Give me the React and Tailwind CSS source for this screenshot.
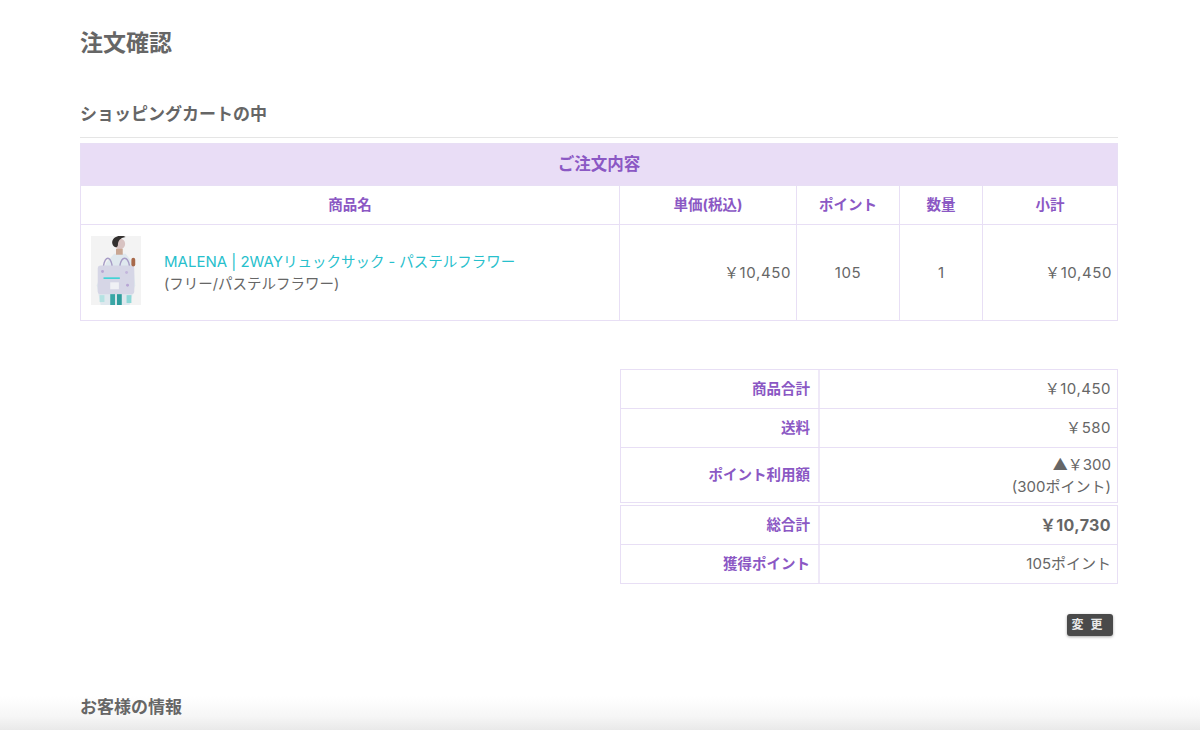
import React from 'react';

const font = "font-['Inter','Noto_Sans_CJK_JP',sans-serif]";
const headCell = 'border border-[#e8dff5] font-bold text-[#8b58c4] text-center p-0';
const bodyCell = 'border border-[#e8dff5] text-[#666] text-[15px] p-0';
const yen = '\uFFE5';

// small stand-in drawing of the product photo
const ProductThumb = () => (
  <svg width="50" height="69" viewBox="0 0 52 70" preserveAspectRatio="none" className="block">
    <rect width="52" height="70" fill="#f3f3f3" />
    <path d="M16 27 L24 18 L36 18 L44 28 L46 50 L40 70 L10 70 L6 50 Z" fill="#dfe8ee" />
    <rect x="7" y="30" width="38" height="29" rx="3" fill="#d6d6e6" />
    <path d="M13 30 C15 20 20 20 22 30 M30 30 C32 20 38 20 40 30" stroke="#a79cc6" strokeWidth="1.5" fill="none" />
    <rect x="13" y="42" width="17" height="1.5" fill="#2fd3d3" />
    <rect x="20" y="47" width="9" height="7" fill="#f0f1f5" />
    <circle cx="12" cy="36" r="1.5" fill="#b7a6d4" />
    <circle cx="38" cy="50" r="1.5" fill="#b7a6d4" />
    <circle cx="37" cy="37" r="1.5" fill="#c3b6dc" />
    <circle cx="30" cy="8" r="5.5" fill="#d8c3c2" />
    <path d="M22 7 C22 0 32 -2 36 1 C30 2 28 5 28 9 C28 13 23 12 22 7 Z" fill="#33302f" />
    <rect x="26" y="13" width="7" height="6" fill="#c9a793" />
    <rect x="42" y="22" width="4" height="9" rx="2" fill="#a8694a" />
    <rect x="20" y="59" width="5" height="11" fill="#3aa6a6" />
    <rect x="27" y="59" width="5" height="11" fill="#2f9d9d" />
    <rect x="37" y="60" width="5" height="8" fill="#8fd8d8" />
    <rect x="9" y="60" width="5" height="7" fill="#b4e2e2" />
  </svg>
);

const summary = [
  { label: '商品合計', value: <span className="tracking-[0.5px]">{yen}10,450</span>, h: 'h-[40px]' },
  { label: '送料', value: <span className="tracking-[0.5px]">{yen}580</span>, h: 'h-[39px]' },
  {
    label: 'ポイント利用額',
    value: <><span className="font-['Noto_Sans_CJK_JP',sans-serif]">▲</span>{yen}300<br />(300ポイント)</>,
    h: 'h-[55px]',
  },
  { label: '総合計', value: <span className="text-[16px] font-bold tracking-[0.4px]">{yen}10,730</span>, h: 'h-[40px]', gap: true },
  { label: '獲得ポイント', value: '105ポイント', h: 'h-[39px]' },
];

const App = () => {
  return (
    <div className={`relative h-[730px] overflow-hidden bg-white px-[80px] pt-[27px] ${font}`}>
      <h1 className="text-[23px] leading-[32px] font-bold text-[#666]">注文確認</h1>

      <h2 className="mt-[39px] h-[40px] w-[1038px] border-b border-[#e5e5e5] text-[17px] leading-[32px] font-bold text-[#666]">
        ショッピングカートの中
      </h2>

      <table className="mt-[5px] w-[1037px] table-fixed border-collapse">
        <colgroup>
          <col className="w-[539px]" />
          <col className="w-[177px]" />
          <col className="w-[103px]" />
          <col className="w-[83px]" />
          <col className="w-[135px]" />
        </colgroup>
        <tbody>
          <tr className="h-[42px]">
            <td colSpan={5} className={`${headCell} bg-[#e9ddf6] text-[16.5px]`}>ご注文内容</td>
          </tr>
          <tr className="h-[39px] text-[14.5px]">
            <td className={headCell}>商品名</td>
            <td className={headCell}>単価(税込)</td>
            <td className={headCell}>ポイント</td>
            <td className={headCell}>数量</td>
            <td className={headCell}>小計</td>
          </tr>
          <tr className="h-[96px]">
            <td className={bodyCell}>
              <div className="flex items-center pb-[4px] pl-[10px]">
                <ProductThumb />
                <div className="ml-[23px] pt-[5px] leading-[22px]">
                  <div className="text-[#27c0cc]">MALENA | 2WAY<span className="text-[14.5px]">リュックサック - パステルフラワー</span></div>
                  <div className="text-[14.5px]">(フリー/パステルフラワー)</div>
                </div>
              </div>
            </td>
            <td className={`${bodyCell} pt-[2px] pr-[5px] text-right tracking-[0.6px]`}>{yen}10,450</td>
            <td className={`${bodyCell} pt-[2px] text-center tracking-[0.6px]`}>105</td>
            <td className={`${bodyCell} pt-[2px] text-center`}>1</td>
            <td className={`${bodyCell} pt-[2px] pr-[5px] text-right tracking-[0.6px]`}>{yen}10,450</td>
          </tr>
        </tbody>
      </table>

      <div className="mt-[48px] ml-[540px] w-[498px]">
        {summary.map((row) => (
          <div
            key={row.label}
            className={`flex border-x border-b border-[#e8dff5] ${row.h} ${row.label === '商品合計' || row.gap ? 'border-t' : ''} ${row.gap ? 'mt-[2px]' : ''}`}
          >
            <div className="flex w-[199px] items-center justify-end border-r-2 border-[#efe9f8] pr-[8px] text-[14.5px] font-bold text-[#8b58c4]">
              {row.label}
            </div>
            <div className="flex flex-1 items-center justify-end pr-[6px] text-right text-[15px] leading-[22px] text-[#666]">
              <div>{row.value}</div>
            </div>
          </div>
        ))}

        <div className="mt-[30px] flex justify-end pr-[5px]">
          <button className="h-[22px] w-[46px] rounded-[3px] bg-[#4a4a4a] pl-[1px] text-[12px] font-bold tracking-[7px] whitespace-nowrap text-[#e8e8e8] shadow-[0_1px_3px_rgba(0,0,0,0.35)]">
            変更
          </button>
        </div>
      </div>

      <h2 className="relative z-10 mt-[59px] text-[17px] leading-[24px] font-bold text-[#666]">お客様の情報</h2>

      <div className="absolute inset-x-0 bottom-0 h-[34px] bg-gradient-to-b from-white/0 via-[#e9e9e9]/40 via-60% to-[#e9e9e9]" />
    </div>
  );
};

export default App;
